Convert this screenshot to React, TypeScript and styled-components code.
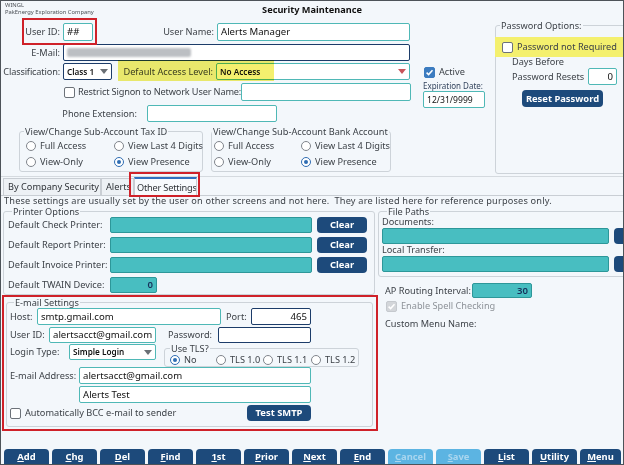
import React from 'react';
import styled, { createGlobalStyle } from 'styled-components';

const FONT = `"Noto Sans", "Open Sans", "DejaVu Sans", sans-serif`;

const C = {
  bg: '#f3f7fb',
  label: '#3d4248',
  teal: '#4fb8b6',
  tealFill: '#48bec1',
  tealFillBorder: '#2d9799',
  navy: '#1d4a7b',
  navyBorder: '#1c3c69',
  red: '#cf2129',
  yellow: '#f4f06e',
  group: '#cdd3d9',
  blue: '#3c7cc0',
};

const GlobalStyle = createGlobalStyle`
  * { box-sizing: border-box; }
  html, body { margin: 0; padding: 0; background: #ffffff; }
  body { font-family: ${FONT}; font-size: 9.2px; color: ${C.label}; }
`;

const Frame = styled.div`
  width: 624px;
  height: 465px;
  border: 1px solid #4d5359;
  background: ${C.bg};
  display: flex;
  flex-direction: column;
  overflow: hidden;
  font-family: ${FONT};
  font-size: 9.2px;
  line-height: 10px;
  color: ${C.label};
`;

const Header = styled.header`
  height: 18px;
  flex: none;
  display: grid;
  grid-template-columns: 1fr auto 1fr;
  align-items: start;
`;

const Company = styled.div`
  padding: 1px 0 0 4px;
  font-size: 5.8px;
  line-height: 7px;
  color: #4a4f55;
  white-space: nowrap;
`;

const Title = styled.h1`
  margin: 3px 0 0;
  font-size: 9.2px;
  line-height: 11px;
  font-weight: 700;
  color: #111;
`;

const Top = styled.section`
  height: 157px;
  flex: none;
  display: flex;
`;

const MainForm = styled.div`
  width: 414px;
  flex: none;
  display: flex;
  flex-direction: column;
`;

const Row = styled.div<{ $mt?: number; $h?: number; $ml?: number; $pl?: number; $w?: number; $align?: string; $gap?: number }>`
  display: flex;
  align-items: ${(p) => p.$align ?? 'center'};
  margin-top: ${(p) => p.$mt ?? 0}px;
  margin-left: ${(p) => p.$ml ?? 0}px;
  padding-left: ${(p) => p.$pl ?? 0}px;
  gap: ${(p) => p.$gap ?? 0}px;
  width: ${(p) => (p.$w ? `${p.$w}px` : 'auto')};
  height: ${(p) => (p.$h ? `${p.$h}px` : 'auto')};
  flex: none;
  white-space: nowrap;
`;

const Label = styled.span<{ $w?: number; $pr?: number; $pl?: number; $left?: boolean; $tight?: boolean }>`
  flex: none;
  width: ${(p) => (p.$w ? `${p.$w}px` : 'auto')};
  text-align: ${(p) => (p.$left ? 'left' : 'right')};
  padding-right: ${(p) => p.$pr ?? (p.$left ? 0 : 3)}px;
  padding-left: ${(p) => p.$pl ?? 0}px;
  letter-spacing: ${(p) => (p.$tight ? '-0.15px' : 'normal')};
  white-space: nowrap;
`;

type Variant = 'teal' | 'navy' | 'fill';

const Field = styled.div<{ $w: number; $h?: number; $v?: Variant; $right?: boolean; $small?: boolean; $ml?: number; $bold?: boolean }>`
  flex: none;
  width: ${(p) => p.$w}px;
  height: ${(p) => p.$h ?? 17}px;
  margin-left: ${(p) => p.$ml ?? 0}px;
  border: ${(p) =>
    p.$v === 'navy'
      ? `1.5px solid ${C.navyBorder}`
      : p.$v === 'fill'
      ? `1px solid ${C.tealFillBorder}`
      : `1.5px solid ${C.teal}`};
  background: ${(p) => (p.$v === 'fill' ? C.tealFill : '#fff')};
  border-radius: 2px;
  display: flex;
  align-items: center;
  justify-content: ${(p) => (p.$right ? 'flex-end' : 'flex-start')};
  padding: 0 3px;
  overflow: hidden;
  white-space: nowrap;
  font-size: ${(p) => (p.$small ? '8.2px' : '9.6px')};
  font-weight: ${(p) => (p.$small || p.$bold ? 600 : 400)};
  color: ${(p) => (p.$bold ? '#17305a' : '#111')};
`;

const CaretSvg = styled.svg`
  margin-left: auto;
  flex: none;
`;

const Caret = ({ color }: { color: string }) => (
  <CaretSvg width="8" height="5" viewBox="0 0 8 5">
    <path d="M0 0h8L4 5z" fill={color} />
  </CaretSvg>
);

const Blur = styled.span`
  width: 124px;
  height: 9px;
  background: #bcbfc3;
  filter: blur(1.3px);
  border-radius: 2px;
`;

const CheckBox = styled.span<{ $checked?: boolean; $disabled?: boolean }>`
  flex: none;
  width: 11px;
  height: 11px;
  border-radius: 2px;
  border: 1px solid ${(p) => (p.$disabled ? '#c5c9ce' : p.$checked ? C.blue : '#6c7279')};
  background: ${(p) => (p.$disabled ? '#d3d6da' : p.$checked ? C.blue : '#fff')};
  display: inline-flex;
  align-items: center;
  justify-content: center;
`;

const Check = ({ checked, disabled }: { checked?: boolean; disabled?: boolean }) => (
  <CheckBox $checked={checked} $disabled={disabled}>
    {(checked || disabled) && (
      <svg width="9" height="9" viewBox="0 0 9 9">
        <path d="M1.6 4.6l2 2 3.9-4.4" stroke="#fff" strokeWidth="1.5" fill="none" />
      </svg>
    )}
  </CheckBox>
);

const RadioDot = styled.span<{ $on?: boolean }>`
  flex: none;
  width: 10px;
  height: 10px;
  border-radius: 50%;
  border: 1px solid ${(p) => (p.$on ? '#2f6db3' : '#80858c')};
  background: #fff;
  display: inline-flex;
  align-items: center;
  justify-content: center;
  &::after {
    content: '';
    width: 4px;
    height: 4px;
    border-radius: 50%;
    background: ${(p) => (p.$on ? '#2f6db3' : 'transparent')};
  }
`;

const Option = styled.span<{ $w?: number }>`
  display: flex;
  align-items: center;
  gap: 4px;
  height: 14px;
  width: ${(p) => (p.$w ? `${p.$w}px` : 'auto')};
  flex: none;
  white-space: nowrap;
`;

const Radio = ({ label, on, w }: { label: string; on?: boolean; w?: number }) => (
  <Option $w={w}>
    <RadioDot $on={on} />
    {label}
  </Option>
);

const Group = styled.fieldset<{ $w: number; $h: number; $ml?: number; $mt?: number; $pl?: number }>`
  margin: ${(p) => p.$mt ?? 0}px 0 0 ${(p) => p.$ml ?? 0}px;
  padding: 0 0 0 ${(p) => p.$pl ?? 0}px;
  min-width: 0;
  border: 1px solid ${C.group};
  border-radius: 3px;
  width: ${(p) => p.$w}px;
  height: ${(p) => p.$h}px;
  flex: none;
  display: flex;
  flex-direction: column;
`;

const Legend = styled.legend<{ $ml?: number }>`
  margin-left: ${(p) => p.$ml ?? 4}px;
  padding: 0 1px;
  font-size: 9.2px;
  line-height: 11px;
  color: ${C.label};
  white-space: nowrap;
`;

const RadioGrid = styled.div<{ $col: number; $pl?: number }>`
  display: grid;
  grid-template-columns: ${(p) => p.$col}px auto;
  row-gap: 2px;
  padding: 2px 0 0 ${(p) => p.$pl ?? 6}px;
`;

const Annot = styled.div<{ $inset: string }>`
  position: relative;
  display: flex;
  align-items: center;
  flex: none;
  &::after {
    content: '';
    position: absolute;
    inset: ${(p) => p.$inset};
    border: 2px solid ${C.red};
    pointer-events: none;
  }
`;

const Highlight = styled.div<{ $inset: string }>`
  position: relative;
  display: flex;
  align-items: center;
  flex: none;
  &::after {
    content: '';
    position: absolute;
    inset: ${(p) => p.$inset};
    background: ${C.yellow};
    mix-blend-mode: multiply;
    pointer-events: none;
  }
`;

const NavyButton = styled.button<{ $w: number; $h?: number; $ml?: number; $mt?: number }>`
  flex: none;
  width: ${(p) => p.$w}px;
  height: ${(p) => p.$h ?? 16}px;
  margin: ${(p) => p.$mt ?? 0}px 0 0 ${(p) => p.$ml ?? 0}px;
  border: none;
  border-radius: 4px;
  background: ${C.navy};
  color: #fff;
  font-family: ${FONT};
  font-weight: 700;
  font-size: 9.4px;
  line-height: 1;
  padding: 0;
`;

const ActiveCol = styled.div`
  width: 80px;
  flex: none;
  display: flex;
  flex-direction: column;
  padding: 46px 0 0 9px;
`;

const ExpLabel = styled.span`
  margin: 2px 0 0 -1px;
  height: 10px;
  font-size: 8px;
  line-height: 10px;
  color: #34455e;
  white-space: nowrap;
`;

const PwdHighlight = styled.div`
  margin: 6px 0 0 -1px;
  height: 20px;
  background: ${C.yellow};
  display: flex;
  align-items: center;
  gap: 4px;
  padding-left: 7px;
  white-space: nowrap;
`;

const TextLine = styled.div<{ $mt?: number; $pl?: number; $muted?: boolean }>`
  margin-top: ${(p) => p.$mt ?? 0}px;
  padding-left: ${(p) => p.$pl ?? 0}px;
  height: 10px;
  line-height: 10px;
  white-space: nowrap;
  color: ${(p) => (p.$muted ? '#8d9298' : C.label)};
  display: flex;
  align-items: center;
  gap: 4px;
`;

const TabStrip = styled.nav`
  height: 19px;
  flex: none;
  display: flex;
  align-items: flex-end;
  padding-left: 2px;
  border-top: 1px solid #d5dadf;
`;

const Tab = styled.div<{ $w: number; $active?: boolean }>`
  width: ${(p) => p.$w}px;
  height: ${(p) => (p.$active ? 19 : 17)}px;
  margin-bottom: ${(p) => (p.$active ? -1 : 0)}px;
  border: 1px solid #c9ced4;
  border-bottom: none;
  border-top: ${(p) => (p.$active ? '2px solid #2f6fc0' : '1px solid #c9ced4')};
  background: ${(p) => (p.$active ? '#f7fafd' : '#edf1f5')};
  display: flex;
  align-items: center;
  padding-left: ${(p) => (p.$active ? 2 : 4)}px;
  letter-spacing: ${(p) => (p.$active ? '-0.2px' : 'normal')};
  white-space: nowrap;
  overflow: hidden;
  flex: none;
  color: #2f3338;
`;

const Panel = styled.main`
  flex: 1;
  min-height: 0;
  border-top: 1px solid #c9ced4;
  display: flex;
  flex-direction: column;
`;

const Info = styled.p`
  margin: 0 0 0 3px;
  height: 10px;
  line-height: 10px;
  letter-spacing: 0.18px;
  white-space: nowrap;
`;

const Columns = styled.div`
  display: flex;
  flex: none;
`;

const LeftCol = styled.div`
  width: 377px;
  flex: none;
  display: flex;
  flex-direction: column;
`;

const RightCol = styled.div`
  flex: 1;
  min-width: 0;
  display: flex;
  flex-direction: column;
`;

const RedBox = styled.div`
  margin-left: 1px;
  width: 376px;
  height: 136px;
  border: 2px solid ${C.red};
  padding-left: 2px;
  flex: none;
`;

const Toolbar = styled.footer`
  height: 15px;
  flex: none;
  display: flex;
  gap: 3px;
  padding-left: 3px;
  align-items: flex-start;
`;

const ToolButton = styled.button<{ $disabled?: boolean; $w?: number }>`
  flex: none;
  width: ${(p) => p.$w ?? 45}px;
  height: 18px;
  border: none;
  border-radius: 4px;
  background: ${(p) => (p.$disabled ? '#5cb4e2' : C.navy)};
  color: ${(p) => (p.$disabled ? '#a9d6ef' : '#fff')};
  font-family: ${FONT};
  font-weight: 700;
  font-size: 9.4px;
  line-height: 15px;
  padding: 0 0 2px;
  display: flex;
  justify-content: center;
`;

const Key = styled.span`
  text-decoration: underline;
`;

const tools: { t: string; d?: boolean; w?: number }[] = [
  { t: 'Add' },
  { t: 'Chg' },
  { t: 'Del' },
  { t: 'Find' },
  { t: '1st' },
  { t: 'Prior' },
  { t: 'Next' },
  { t: 'End' },
  { t: 'Cancel', d: true },
  { t: 'Save', d: true },
  { t: 'List' },
  { t: 'Utility' },
  { t: 'Menu', w: 41 },
];

const printers = ['Default Check Printer:', 'Default Report Printer:', 'Default Invoice Printer:'];

export default function App() {
  return (
    <>
      <GlobalStyle />
      <Frame>
        <Header>
          <Company>
            WINGL
            <br />
            PakEnergy Exploration Company
          </Company>
          <Title>Security Maintenance</Title>
          <span />
        </Header>

        <Top>
          <MainForm>
            <Row $mt={4} $h={18}>
              <Annot $inset="-5px -4px -4px 21px">
                <Label $w={62}>User ID:</Label>
                <Field $w={30} $h={18}>##</Field>
              </Annot>
              <Label $w={124}>User Name:</Label>
              <Field $w={193} $h={18}>Alerts Manager</Field>
            </Row>
            <Row $mt={3} $h={17}>
              <Label $w={62}>E-Mail:</Label>
              <Field $w={347} $v="navy">
                <Blur />
              </Field>
            </Row>
            <Row $mt={2} $h={17}>
              <Label $w={62} $tight>
                Classification:
              </Label>
              <Field $w={49} $v="navy" $small>
                Class 1
                <Caret color="#6a6f75" />
              </Field>
              <Highlight $inset="-3px 136px -1px 6px">
                <Label $w={104}>Default Access Level:</Label>
                <Field $w={194} $small>
                  No Access
                  <Caret color="#c8545a" />
                </Field>
              </Highlight>
            </Row>
            <Row $mt={3} $h={18}>
              <Row $ml={63} $gap={3} $w={177}>
                <Check />
                <Label $left $tight>
                  Restrict Signon to Network User Name:
                </Label>
              </Row>
              <Field $w={170} $h={18} />
            </Row>
            <Row $mt={4} $h={17}>
              <Label $w={146} $pr={10}>
                Phone Extension:
              </Label>
              <Field $w={130} />
            </Row>
            <Row $mt={4} $h={46} $ml={18} $gap={8} $align="stretch">
              <Group $w={184} $h={46}>
                <Legend $ml={4}>View/Change Sub-Account Tax ID</Legend>
                <RadioGrid $col={88}>
                  <Radio label="Full Access" />
                  <Radio label="View Last 4 Digits" />
                  <Radio label="View-Only" />
                  <Radio label="View Presence" on />
                </RadioGrid>
              </Group>
              <Group $w={180} $h={46}>
                <Legend $ml={0}>View/Change Sub-Account Bank Account</Legend>
                <RadioGrid $col={87} $pl={2}>
                  <Radio label="Full Access" />
                  <Radio label="View Last 4 Digits" />
                  <Radio label="View-Only" />
                  <Radio label="View Presence" on />
                </RadioGrid>
              </Group>
            </Row>
          </MainForm>

          <ActiveCol>
            <Row $h={14} $gap={4}>
              <Check checked />
              Active
            </Row>
            <ExpLabel>Expiration Date:</ExpLabel>
            <Field $w={62} $ml={-1} style={{ fontSize: 8.6 }}>
              12/31/9999
            </Field>
          </ActiveCol>

          <Group $w={140} $h={154} $mt={1}>
            <Legend $ml={4}>Password Options:</Legend>
            <PwdHighlight>
              <Check />
              Password not Required
            </PwdHighlight>
            <TextLine $pl={16}>Days Before</TextLine>
            <Row $mt={1} $h={17}>
              <Label $w={92} $left $pl={16}>
                Password Resets
              </Label>
              <Field $w={29} $right>
                0
              </Field>
            </Row>
            <NavyButton $w={81} $h={17} $ml={26} $mt={5}>
              Reset Password
            </NavyButton>
          </Group>
        </Top>

        <TabStrip>
          <Tab $w={98}>By Company Security</Tab>
          <Tab $w={33}>Alerts</Tab>
          <Annot $inset="-5px -3px -2px -5px" style={{ alignSelf: 'flex-end' }}>
            <Tab $w={63} $active>
              Other Settings
            </Tab>
          </Annot>
        </TabStrip>

        <Panel>
          <Info>
            These settings are usually set by the user on other screens and not here.&nbsp; They are listed here for
            reference purposes only.
          </Info>
          <Columns>
            <LeftCol>
              <Group $w={372} $h={89} $ml={2} $pl={3}>
                <Legend $ml={5}>Printer Options</Legend>
                {printers.map((p, i) => (
                  <Row key={p} $mt={i === 0 ? 0 : 4} $h={16}>
                    <Label $w={103} $left $pl={1}>
                      {p}
                    </Label>
                    <Field $w={202} $h={16} $v="fill" />
                    <NavyButton $w={50} $h={16} $ml={5}>
                      Clear
                    </NavyButton>
                  </Row>
                ))}
                <Row $mt={4} $h={16}>
                  <Label $w={103} $left $pl={1}>
                    Default TWAIN Device:
                  </Label>
                  <Field $w={47} $h={16} $v="fill" $right $bold>
                    0
                  </Field>
                </Row>
              </Group>

              <RedBox>
                <Group $w={367} $h={130} $pl={3}>
                  <Legend $ml={4}>E-mail Settings</Legend>
                  <Row $h={17}>
                    <Label $w={27} $left>
                      Host:
                    </Label>
                    <Field $w={184}>smtp.gmail.com</Field>
                    <Label $w={30} $left $pl={5}>
                      Port:
                    </Label>
                    <Field $w={60} $v="navy" $right>
                      465
                    </Field>
                  </Row>
                  <Row $mt={2} $h={16}>
                    <Label $w={39} $left>
                      User ID:
                    </Label>
                    <Field $w={107} $h={16}>
                      alertsacct@gmail.com
                    </Field>
                    <Label $w={62} $left $pl={12}>
                      Password:
                    </Label>
                    <Field $w={93} $h={16} $v="navy" />
                  </Row>
                  <Row $h={24} $align="flex-start">
                    <Label $w={59} $left style={{ marginTop: 1, lineHeight: '16px' }}>
                      Login Type:
                    </Label>
                    <Field $w={87} $h={16} $small style={{ marginTop: 1 }}>
                      Simple Login
                      <Caret color="#6a6f75" />
                    </Field>
                    <Group $w={195} $h={24} $ml={8}>
                      <Legend $ml={5}>Use TLS?</Legend>
                      <Row $h={12} $pl={5}>
                        <Radio label="No" on w={46} />
                        <Radio label="TLS 1.0" w={47} />
                        <Radio label="TLS 1.1" w={48} />
                        <Radio label="TLS 1.2" />
                      </Row>
                    </Group>
                  </Row>
                  <Row $h={17}>
                    <Label $w={69} $left>
                      E-mail Address:
                    </Label>
                    <Field $w={232}>alertsacct@gmail.com</Field>
                  </Row>
                  <Row $mt={2} $h={17} $ml={69}>
                    <Field $w={232}>Alerts Test</Field>
                  </Row>
                  <Row $mt={2} $h={16}>
                    <Row $gap={4} $w={237}>
                      <Check />
                      Automatically BCC e-mail to sender
                    </Row>
                    <NavyButton $w={64} $h={16}>
                      Test SMTP
                    </NavyButton>
                  </Row>
                </Group>
              </RedBox>
            </LeftCol>

            <RightCol>
              <Group $w={262} $h={71} $pl={3}>
                <Legend $ml={5}>File Paths</Legend>
                <TextLine>Documents:</TextLine>
                <Row $mt={1} $h={16}>
                  <Field $w={227} $h={16} $v="fill" />
                  <NavyButton $w={30} $h={16} $ml={5} />
                </Row>
                <TextLine $mt={1}>Local Transfer:</TextLine>
                <Row $mt={1} $h={16}>
                  <Field $w={227} $h={16} $v="fill" />
                  <NavyButton $w={30} $h={16} $ml={5} />
                </Row>
              </Group>
              <Row $mt={6} $h={15}>
                <Label $w={94} $left $pl={7}>
                  AP Routing Interval:
                </Label>
                <Field $w={60} $h={15} $v="fill" $right $bold>
                  30
                </Field>
              </Row>
              <TextLine $mt={3} $pl={8} $muted>
                <Check disabled />
                Enable Spell Checking
              </TextLine>
              <TextLine $mt={8} $pl={7}>
                Custom Menu Name:
              </TextLine>
            </RightCol>
          </Columns>
        </Panel>

        <Toolbar>
          {tools.map((b) => (
            <ToolButton key={b.t} $disabled={b.d} $w={b.w}>
              <Key>{b.t[0]}</Key>
              {b.t.slice(1)}
            </ToolButton>
          ))}
        </Toolbar>
      </Frame>
    </>
  );
}
